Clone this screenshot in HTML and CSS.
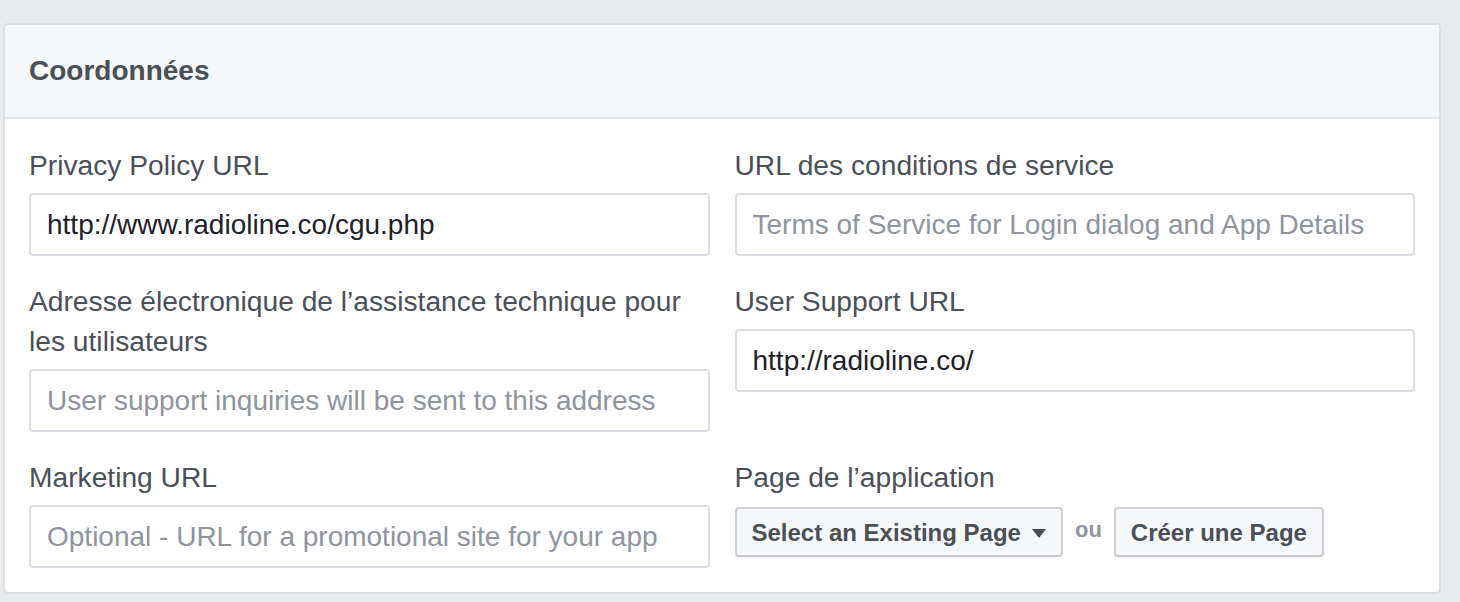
FILE: index.html
```html
<!DOCTYPE html>
<html lang="fr">
<head>
<meta charset="utf-8">
<title>Coordonnées</title>
<link rel="stylesheet" href="styles.css">
</head>
<body>
<section class="card">
  <header class="card-header">Coordonnées</header>
  <div class="card-body">
    <div class="field">
      <label class="field-label">Privacy Policy URL</label>
      <input class="field-input" type="text" value="http://www.radioline.co/cgu.php">
    </div>
    <div class="field">
      <label class="field-label">URL des conditions de service</label>
      <input class="field-input" type="text" placeholder="Terms of Service for Login dialog and App Details">
    </div>
    <div class="field">
      <label class="field-label">Adresse électronique de l’assistance technique pour les utilisateurs</label>
      <input class="field-input" type="text" placeholder="User support inquiries will be sent to this address">
    </div>
    <div class="field">
      <label class="field-label">User Support URL</label>
      <input class="field-input" type="text" value="http://radioline.co/">
    </div>
    <div class="field">
      <label class="field-label">Marketing URL</label>
      <input class="field-input" type="text" placeholder="Optional - URL for a promotional site for your app">
    </div>
    <div class="field">
      <label class="field-label">Page de l’application</label>
      <div class="page-actions">
        <button class="btn" type="button">Select an Existing Page<span class="caret"></span></button>
        <span class="or">ou</span>
        <button class="btn" type="button">Créer une Page</button>
      </div>
    </div>
  </div>
</section>
</body>
</html>
```
FILE: styles.css
```css
html, body {
  margin: 0;
  padding: 0;
  background: #e9ebee;
  font-family: "Liberation Sans", Arial, Helvetica, sans-serif;
}

.card {
  margin: 23px 19px 0 3px;
  background: #ffffff;
  border: 2px solid #dddfe2;
  border-radius: 5px;
  overflow: hidden;
}

.card-header {
  height: 92px;
  display: flex;
  align-items: center;
  padding: 0 24px;
  background: #f6f7f9;
  border-bottom: 2px solid #e5e6e9;
  font-size: 28px;
  font-weight: bold;
  color: #4b4f56;
}

.card-body {
  display: grid;
  grid-template-columns: 1fr 1fr;
  column-gap: 25px;
  row-gap: 25px;
  padding: 26px 24px 24px 24px;
}

.field {
  display: flex;
  flex-direction: column;
}

.field-label {
  font-size: 28.2px;
  line-height: 40px;
  color: #4b4f56;
  margin-bottom: 8px;
}

.field-input {
  box-sizing: border-box;
  height: 63px;
  width: 100%;
  margin: 0;
  padding: 0 16px;
  border: 2px solid #dadde1;
  border-radius: 4px;
  background: #ffffff;
  font-family: "Liberation Sans", Arial, Helvetica, sans-serif;
  font-size: 28px;
  color: #1d2129;
  outline: none;
}

.field-input::placeholder {
  color: #90949c;
  opacity: 1;
}

.page-actions {
  display: flex;
  align-items: center;
  padding-top: 2px;
}

.btn {
  box-sizing: border-box;
  height: 50px;
  display: inline-flex;
  align-items: center;
  margin: 0;
  padding: 2px 15px 0 15px;
  border: 2px solid #ced0d4;
  border-bottom-color: #c4c6ca;
  border-radius: 4px;
  background: #f6f7f9;
  box-shadow: 0 1px 1px rgba(0, 0, 0, 0.05);
  font-family: "Liberation Sans", Arial, Helvetica, sans-serif;
  font-size: 24px;
  font-weight: bold;
  color: #4b4f56;
}

.caret {
  display: inline-block;
  width: 0;
  height: 0;
  margin-left: 11px;
  border-left: 7px solid transparent;
  border-right: 7px solid transparent;
  border-top: 9px solid #4b4f56;
}

.or {
  margin: 0 12px;
  font-size: 22px;
  font-weight: bold;
  color: #90949c;
  position: relative;
  top: -2px;
}
```
